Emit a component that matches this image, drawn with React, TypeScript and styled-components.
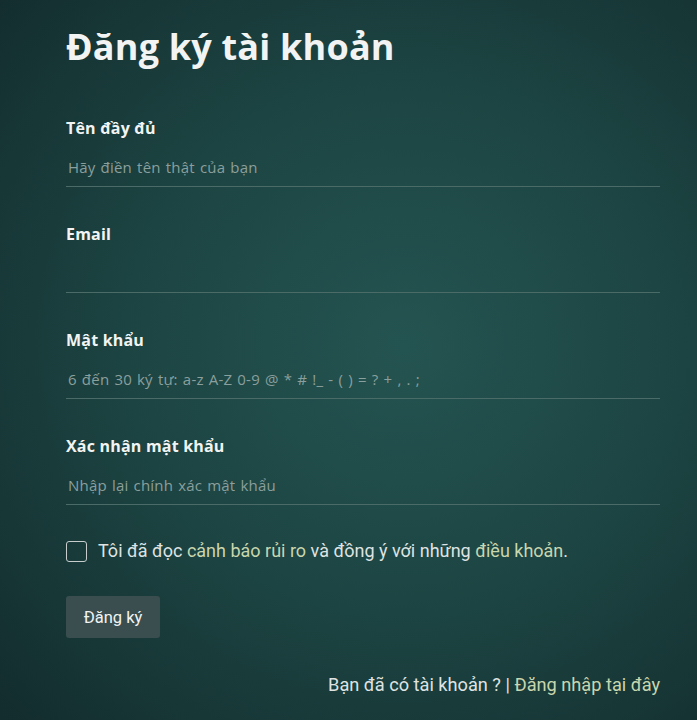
import React from 'react';
import styled, { createGlobalStyle } from 'styled-components';

const COLOR = {
  TEXT: '#f2f4f3',
  MUTED: '#8b9f9c',
  LINE: '#4b6b69',
  LINK: '#c9d6ae',
  BODY: '#dfe3e2',
};

const GlobalStyle = createGlobalStyle`
  html, body {
    margin: 0;
    padding: 0;
    height: 100%;
  }
  body {
    background: #13302f;
    font-family: 'Open Sans', 'Noto Sans', sans-serif;
  }
  #root {
    min-height: 100%;
  }
`;

const fields = [
  { label: 'Tên đầy đủ', placeholder: 'Hãy điền tên thật của bạn', type: 'text' },
  { label: 'Email', placeholder: '', type: 'email' },
  {
    label: 'Mật khẩu',
    placeholder: '6 đến 30 ký tự: a-z A-Z 0-9 @ * # !_ - ( ) = ? + , . ;',
    type: 'password',
  },
  { label: 'Xác nhận mật khẩu', placeholder: 'Nhập lại chính xác mật khẩu', type: 'password' },
];

export default function App() {
  return (
    <Page>
      <GlobalStyle />
      <Form onSubmit={(e) => e.preventDefault()}>
        <Title>Đăng ký tài khoản</Title>
        {fields.map((f) => (
          <Field key={f.label}>
            <Label>{f.label}</Label>
            <Input type={f.type} placeholder={f.placeholder} />
          </Field>
        ))}
        <Agree>
          <Box type="checkbox" />
          <span>
            Tôi đã đọc <Link href="#">cảnh báo rủi ro</Link> và đồng ý với những{' '}
            <Link href="#">điều khoản</Link>.
          </span>
        </Agree>
        <Submit type="submit">Đăng ký</Submit>
        <Footer>
          Bạn đã có tài khoản ? | <Link href="#">Đăng nhập tại đây</Link>
        </Footer>
      </Form>
    </Page>
  );
}

const Page = styled.div`
  min-height: 720px;
  background-image: radial-gradient(
    ellipse 80% 75% at 58% 48%,
    #245451 0%,
    #1c4442 50%,
    #132c2d 100%
  );
  box-sizing: border-box;
  padding: 25px 37px 0 66px;
`;

const Form = styled.form`
  display: flex;
  flex-direction: column;
  width: 594px;
`;

const Title = styled.h1`
  color: ${COLOR.TEXT};
  font-family: 'Open Sans', 'Noto Sans', sans-serif;
  font-size: 36px;
  font-weight: 700;
  letter-spacing: 0.2px;
  line-height: 44px;
  margin: 0 0 47px;
`;

const Field = styled.div`
  display: flex;
  flex-direction: column;
  margin-bottom: 35px;
`;

const Label = styled.label`
  color: ${COLOR.TEXT};
  font-size: 16px;
  font-weight: 700;
  letter-spacing: 0.2px;
  line-height: 24px;
`;

const Input = styled.input`
  background: transparent;
  border: 0;
  border-bottom: 1px solid ${COLOR.LINE};
  box-sizing: border-box;
  color: ${COLOR.TEXT};
  font-family: 'Open Sans', 'Noto Sans', sans-serif;
  font-size: 15px;
  height: 39px;
  letter-spacing: 0.2px;
  margin-top: 8px;
  outline: none;
  padding: 0 2px;
  word-spacing: 1px;
  &::placeholder {
    color: ${COLOR.MUTED};
  }
`;

const Agree = styled.label`
  align-items: center;
  color: ${COLOR.BODY};
  display: flex;
  font-family: Roboto, 'Liberation Sans', sans-serif;
  font-size: 18px;
  gap: 11px;
  line-height: 22px;
  margin-top: 0;
`;

const Box = styled.input`
  appearance: none;
  border: 1.5px solid #c6cdcc;
  border-radius: 3px;
  box-sizing: border-box;
  height: 21px;
  margin: 0;
  width: 21px;
`;

const Link = styled.a`
  color: ${COLOR.LINK};
  text-decoration: none;
`;

const Submit = styled.button`
  align-self: flex-start;
  background: #3a4e4f;
  border: 0;
  border-radius: 3px;
  color: ${COLOR.TEXT};
  font-family: Roboto, 'Liberation Sans', sans-serif;
  font-size: 16.5px;
  height: 42px;
  margin-top: 34px;
  padding: 0;
  width: 94px;
`;

const Footer = styled.p`
  color: ${COLOR.BODY};
  font-family: Roboto, 'Liberation Sans', sans-serif;
  font-size: 18.2px;
  line-height: 24px;
  margin: 35px 0 0;
  text-align: right;
`;
